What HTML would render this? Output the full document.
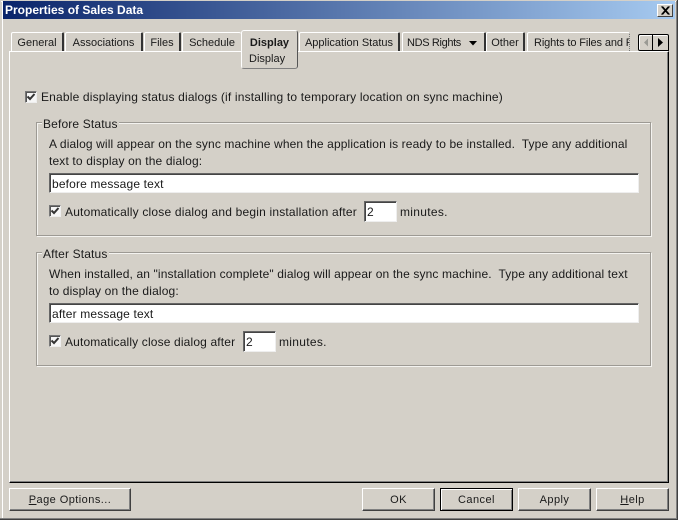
<!DOCTYPE html>
<html>
<head>
<meta charset="utf-8">
<style>
html,body{margin:0;padding:0;background:#d4d0c8;}
#w{position:relative;width:678px;height:520px;overflow:hidden;background:#d4d0c8;font-family:"Liberation Sans",sans-serif;font-size:12px;letter-spacing:.15px;color:#1a1a1a;}
#w div{position:absolute;box-sizing:border-box;}
.t{white-space:nowrap;line-height:14px;height:14px;}
.tab{background:#d4d0c8;border-top:1px solid #fff;border-left:1px solid #fff;border-right:2px solid #333;border-radius:2px 2px 0 0;text-align:center;line-height:20px;white-space:nowrap;height:19px;top:32px;font-size:11px;letter-spacing:0;}
.btn{background:#d4d0c8;border-top:1px solid #fff;border-left:1px solid #fff;border-right:1px solid #404040;border-bottom:1px solid #404040;box-shadow:inset -1px -1px 0 #808080;text-align:center;line-height:22px;height:23px;top:488px;font-size:11px;letter-spacing:.45px;}
.grp{left:36px;width:615px;border:1px solid #9d9a94;box-shadow:inset 1px 1px 0 #f4f3f0,1px 1px 0 #f4f3f0;}
.leg{background:#d4d0c8;padding:0 1px;left:42px;}
.chk{width:12px;height:12px;background:#f6f6f6;border-top:1px solid #777;border-left:1px solid #777;border-right:1px solid #eee;border-bottom:1px solid #eee;box-shadow:inset 1px 1px 0 #555;}
.inp{background:#fff;border-top:1px solid #666;border-left:1px solid #666;border-right:1px solid #eee;border-bottom:1px solid #eee;box-shadow:inset 1px 1px 0 #444;line-height:20px;padding-left:2px;height:20px;white-space:nowrap;}
u{text-decoration:underline;}
</style>
</head>
<body>
<div id="w">
  <!-- window edges -->
  <div style="left:1px;top:1px;width:676px;height:1px;background:#fff"></div>
  <div style="left:2px;top:1px;width:1px;height:517px;background:#fff"></div>
  <div style="left:0;top:518px;width:678px;height:1px;background:#808080"></div>
  <div style="left:0;top:519px;width:678px;height:1px;background:#404040"></div>
  <div style="left:676px;top:1px;width:1px;height:518px;background:#808080"></div>
  <div style="left:677px;top:0;width:1px;height:520px;background:#404040"></div>

  <!-- title bar -->
  <div style="left:3px;top:1px;width:672px;height:18px;background:linear-gradient(90deg,#0a246a,#a6caf0)"></div>
  <div class="t" style="left:5px;top:3px;color:#fff;font-weight:bold;letter-spacing:0;">Properties of Sales Data</div>
  <div style="left:657px;top:4px;width:16px;height:13px;background:#d4d0c8;border-top:1px solid #fff;border-left:1px solid #fff;border-right:1px solid #404040;border-bottom:1px solid #404040;">
    <svg width="14" height="11" style="position:absolute;left:0;top:0"><path d="M3.500 1.500L10.500 9.500M4.500 1.500L11.500 9.500M10.500 1.500L3.500 9.500M11.500 1.500L4.500 9.500" stroke="#000" stroke-width="1" fill="none"/></svg>
  </div>

  <!-- tab pane -->
  <div style="left:9px;top:51px;width:660px;height:432px;background:#d4d0c8;border-top:1px solid #fff;border-left:1px solid #fff;border-right:1px solid #000;border-bottom:1px solid #000;box-shadow:inset -1px -1px 0 #808080;"></div>

  <!-- tabs -->
  <div class="tab" style="left:11px;width:53px;">General</div>
  <div class="tab" style="left:65px;width:78px;">Associations</div>
  <div class="tab" style="left:144px;width:37px;">Files</div>
  <div class="tab" style="left:182px;width:59px;border-right:none;">Schedule</div>
  <div class="tab" style="left:241px;top:30px;width:57px;height:39px;font-weight:bold;border-bottom:1px solid #808080;border-right:1px solid #555;border-radius:3px;line-height:24px;">Display</div>
  <div class="t" style="left:249px;top:52px;font-size:11px;letter-spacing:0;">Display</div>
  <div class="tab" style="left:299px;width:101px;">Application Status</div>
  <div class="tab" style="left:402px;width:84px;text-align:left;padding-left:4px;letter-spacing:-.35px;">NDS Rights</div>
  <svg style="position:absolute;left:469px;top:41px" width="8" height="5"><path d="M0 0H8L4 4.500Z" fill="#000"/></svg>
  <div class="tab" style="left:486px;width:39px;">Other</div>
  <div class="tab" style="left:527px;width:103px;border-right:1px dotted #777;text-align:left;padding-left:6px;overflow:hidden;letter-spacing:-.12px;">Rights to Files and Fo</div>

  <!-- scroll buttons -->
  <div style="left:638px;top:34px;width:15px;height:17px;background:#d4d0c8;border:1px solid #000;border-radius:2px 0 0 2px;box-shadow:inset 1px 1px 0 #fff;">
    <svg width="13" height="15" style="position:absolute;left:0;top:0"><path d="M5 7.500L9 3.500V11.500Z" fill="#9a9a94"/></svg>
  </div>
  <div style="left:653px;top:34px;width:16px;height:17px;background:#d4d0c8;border:1px solid #000;border-left:none;border-radius:0 2px 0 0;box-shadow:inset 0 1px 0 #fff;">
    <svg width="15" height="15" style="position:absolute;left:0;top:0"><path d="M5 3L10 7.500L5 12Z" fill="#000"/></svg>
  </div>

  <!-- enable -->
  <div class="chk" style="left:25px;top:91px;"><svg width="10" height="10" style="position:absolute;left:0;top:0"><path d="M1.500 4.500L4 7L8.500 2" stroke="#333" stroke-width="2" fill="none"/></svg></div>
  <div class="t" style="left:41px;top:90px;letter-spacing:.175px;">Enable displaying status dialogs (if installing to temporary location on sync machine)</div>

  <!-- before -->
  <div class="grp" style="top:122px;height:114px;"></div>
  <div class="t leg" style="top:117px;">Before Status</div>
  <div class="t" style="left:49px;top:137px;letter-spacing:.12px;">A dialog will appear on the sync machine when the application is ready to be installed.&nbsp; Type any additional</div>
  <div class="t" style="left:49px;top:154px;">text to display on the dialog:</div>
  <div class="inp" style="left:49px;top:173px;width:590px;">before message text</div>
  <div class="chk" style="left:49px;top:205px;"><svg width="10" height="10" style="position:absolute;left:0;top:0"><path d="M1.500 4.500L4 7L8.500 2" stroke="#333" stroke-width="2" fill="none"/></svg></div>
  <div class="t" style="left:65px;top:205px;letter-spacing:.19px;">Automatically close dialog and begin installation after</div>
  <div class="inp" style="left:364px;top:201px;width:33px;height:21px;line-height:20px;">2</div>
  <div class="t" style="left:400px;top:205px;letter-spacing:.3px;">minutes.</div>

  <!-- after -->
  <div class="grp" style="top:252px;height:114px;"></div>
  <div class="t leg" style="top:247px;">After Status</div>
  <div class="t" style="left:49px;top:267px;letter-spacing:.13px;">When installed, an "installation complete" dialog will appear on the sync machine.&nbsp; Type any additional text</div>
  <div class="t" style="left:49px;top:284px;">to display on the dialog:</div>
  <div class="inp" style="left:49px;top:303px;width:590px;">after message text</div>
  <div class="chk" style="left:49px;top:335px;"><svg width="10" height="10" style="position:absolute;left:0;top:0"><path d="M1.500 4.500L4 7L8.500 2" stroke="#333" stroke-width="2" fill="none"/></svg></div>
  <div class="t" style="left:65px;top:335px;">Automatically close dialog after</div>
  <div class="inp" style="left:243px;top:331px;width:33px;height:21px;line-height:20px;">2</div>
  <div class="t" style="left:279px;top:335px;letter-spacing:.3px;">minutes.</div>

  <!-- buttons -->
  <div class="btn" style="left:9px;width:122px;"><u>P</u>age Options...</div>
  <div class="btn" style="left:362px;width:73px;">OK</div>
  <div class="btn" style="left:440px;width:73px;border:1px solid #000;box-shadow:inset 1px 1px 0 #fff,inset -1px -1px 0 #808080;">Cancel</div>
  <div class="btn" style="left:518px;width:73px;">Apply</div>
  <div class="btn" style="left:596px;width:73px;"><u>H</u>elp</div>
</div>
</body>
</html>
